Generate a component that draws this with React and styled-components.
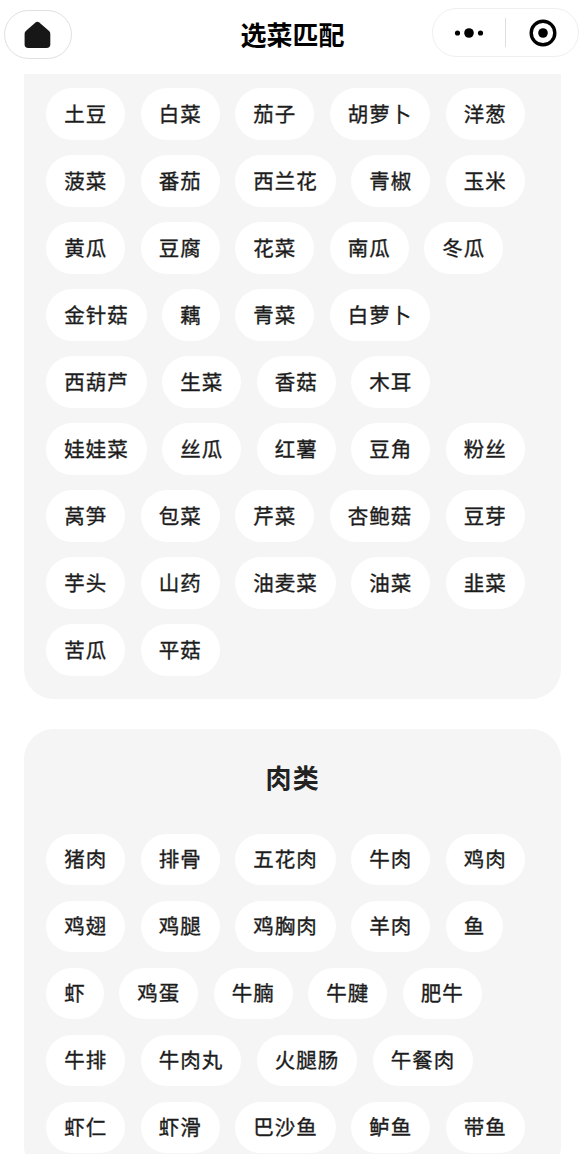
import React from 'react';
import styled, { createGlobalStyle } from 'styled-components';

const GlobalStyle = createGlobalStyle`
  * { box-sizing: border-box; }
  body {
    margin: 0;
    background: #fff;
    color: #1c1c1c;
    font-family: "Noto Sans CJK SC", sans-serif;
  }
`;

const Page = styled.div`
  height: 1154px;
  overflow: hidden;
  display: flex;
  flex-direction: column;
`;

const Header = styled.header`
  flex: none;
  height: 73.7px;
  padding: 8px 3px 0 4px;
  display: grid;
  grid-template-columns: 1fr auto 1fr;
  align-items: start;
`;

const HomeButton = styled.button`
  width: 68px;
  height: 49px;
  margin: 2px 0 0;
  padding: 0;
  display: flex;
  align-items: center;
  justify-content: center;
  border: 1px solid #e0e0e0;
  border-radius: 25px;
  background: #fff;
`;

const Title = styled.h1`
  margin: 7px 0 0;
  padding-left: 2px;
  font-size: 26px;
  line-height: 38px;
  font-weight: 700;
  color: #000;
`;

const Capsule = styled.div`
  justify-self: end;
  width: 147px;
  height: 49px;
  display: flex;
  align-items: center;
  border: 1px solid #efefef;
  border-radius: 25px;
`;

const CapsuleButton = styled.button`
  flex: none;
  width: 72px;
  height: 29px;
  padding: 0;
  display: flex;
  align-items: center;
  justify-content: center;
  border: 0;
  background: none;
  & + & {
    width: 73px;
    padding-left: 2px;
    border-left: 1px solid #dedede;
  }
`;

const Content = styled.main`
  flex: none;
  padding: 0 21px 0 23.5px;
  display: flex;
  flex-direction: column;
  gap: 30px;
`;

const Panel = styled.section`
  padding: ${(p) => (p.$continued ? '14.6px' : '29px')} 22.7px 23px;
  border-radius: ${(p) => (p.$continued ? '1px 1px 30px 30px' : '30px')};
  background: #f5f5f5;
`;

const PanelTitle = styled.h2`
  margin: 0 0 39.2px;
  padding-left: 1px;
  font-size: 26px;
  line-height: 37px;
  font-weight: 700;
  letter-spacing: 1.3px;
  text-align: center;
  color: #222;
`;

const ChipList = styled.div`
  display: flex;
  flex-wrap: wrap;
  gap: 15.5px;
`;

const Chip = styled.button`
  height: 51.5px;
  padding: 0 18px 2px;
  border: 0;
  border-radius: 26px;
  background: #fff;
  color: #1c1c1c;
  font-family: inherit;
  font-size: 20.5px;
  font-weight: 400;
  line-height: 49px;
  letter-spacing: 1px;
  white-space: nowrap;
  -webkit-text-stroke: 0.35px #1c1c1c;
`;

const vegetables = [
  '土豆', '白菜', '茄子', '胡萝卜', '洋葱',
  '菠菜', '番茄', '西兰花', '青椒', '玉米',
  '黄瓜', '豆腐', '花菜', '南瓜', '冬瓜',
  '金针菇', '藕', '青菜', '白萝卜',
  '西葫芦', '生菜', '香菇', '木耳',
  '娃娃菜', '丝瓜', '红薯', '豆角', '粉丝',
  '莴笋', '包菜', '芹菜', '杏鲍菇', '豆芽',
  '芋头', '山药', '油麦菜', '油菜', '韭菜',
  '苦瓜', '平菇',
];

const meats = [
  '猪肉', '排骨', '五花肉', '牛肉', '鸡肉',
  '鸡翅', '鸡腿', '鸡胸肉', '羊肉', '鱼',
  '虾', '鸡蛋', '牛腩', '牛腱', '肥牛',
  '牛排', '牛肉丸', '火腿肠', '午餐肉',
  '虾仁', '虾滑', '巴沙鱼', '鲈鱼', '带鱼',
];

function Chips({ items }) {
  return (
    <ChipList>
      {items.map((item) => (
        <Chip key={item}>{item}</Chip>
      ))}
    </ChipList>
  );
}

export default function App() {
  return (
    <Page>
      <GlobalStyle />
      <Header>
        <HomeButton aria-label="首页">
          <svg width="28" height="28" viewBox="0 0 28 28" fill="#171717">
            <path d="M11.5 1.5Q13.4 0 15.3 1.5L25.1 10Q26.3 11.1 26.3 12.8V23.2Q26.3 27 22.5 27H4.3Q.6 27 .6 23.2V12.8Q.6 11.1 1.8 10Z" />
          </svg>
        </HomeButton>
        <Title>选菜匹配</Title>
        <Capsule>
          <CapsuleButton aria-label="更多">
            <svg width="30" height="12" viewBox="0 0 30 12">
              <circle cx="3.5" cy="6" r="2.6" />
              <circle cx="15" cy="6" r="4.8" />
              <circle cx="26.5" cy="6" r="2.6" />
            </svg>
          </CapsuleButton>
          <CapsuleButton aria-label="关闭">
            <svg width="28" height="28" viewBox="0 0 28 28">
              <circle cx="14" cy="14" r="11.8" fill="none" stroke="#000" strokeWidth="3.4" />
              <circle cx="14" cy="14" r="4.8" />
            </svg>
          </CapsuleButton>
        </Capsule>
      </Header>
      <Content>
        <Panel $continued>
          <Chips items={vegetables} />
        </Panel>
        <Panel>
          <PanelTitle>肉类</PanelTitle>
          <Chips items={meats} />
        </Panel>
      </Content>
    </Page>
  );
}
